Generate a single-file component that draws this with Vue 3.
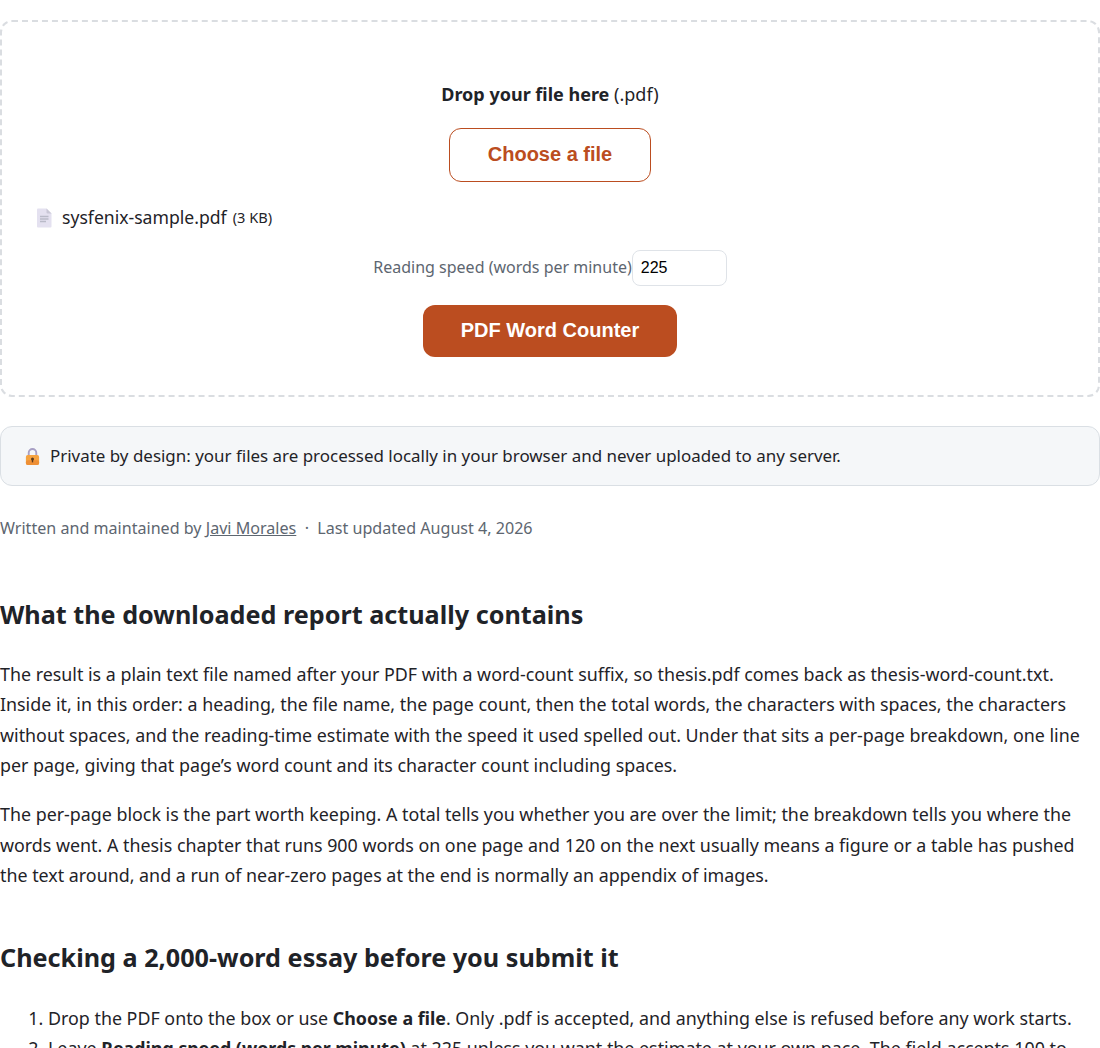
<template>
  <div class="page">
    <div class="dropzone">
      <p class="drop-title"><strong>Drop your file here</strong> (.pdf)</p>
      <button class="choose-btn">Choose a file</button>

      <div class="file-row">
        <svg class="file-icon" viewBox="0 0 16 20" width="16" height="20">
          <path d="M1 1.5Q1 .5 2 .5H10.5L15.5 5.5V18.5Q15.5 19.5 14.5 19.5H2Q1 19.5 1 18.5Z" fill="#e4e1f0" />
          <path d="M10.5 .5L15.5 5.5H11.5Q10.5 5.5 10.5 4.5Z" fill="#c9c7d6" />
          <path d="M4 8.5H12.5M4 11H12.5M4 13.5H10" stroke="#b9bac8" stroke-width="1.4" />
        </svg>
        <span class="file-name">sysfenix-sample.pdf</span>
        <span class="file-size">(3 KB)</span>
      </div>

      <div class="speed-row">
        <label for="speed">Reading speed (words per minute)</label>
        <input id="speed" v-model="speed" type="number" />
      </div>

      <button class="count-btn">PDF Word Counter</button>
    </div>

    <div class="privacy">
      <svg class="lock" viewBox="0 0 18 20" width="17" height="19">
        <path d="M5 9.5V6a4 4 0 0 1 8 0v3.5" fill="none" stroke="#a79fc4" stroke-width="2" />
        <rect x="2" y="8.5" width="14" height="10.5" rx="2" fill="#f5a340" />
        <rect x="2" y="14" width="14" height="5" rx="2" fill="#ee8f35" />
        <circle cx="9" cy="12.6" r="1.6" fill="#5b3a1e" />
        <rect x="8.3" y="13" width="1.4" height="3.2" fill="#5b3a1e" />
      </svg>
      <span>Private by design: your files are processed locally in your browser and never uploaded to any server.</span>
    </div>

    <p class="byline">
      Written and maintained by <a href="#">Javi Morales</a> &nbsp;·&nbsp; Last updated August 4, 2026
    </p>

    <h2 class="first">What the downloaded report actually contains</h2>
    <p>The result is a plain text file named after your PDF with a word-count suffix, so thesis.pdf comes back as thesis-word-count.txt. Inside it, in this order: a heading, the file name, the page count, then the total words, the characters with spaces, the characters without spaces, and the reading-time estimate with the speed it used spelled out. Under that sits a per-page breakdown, one line per page, giving that page’s word count and its character count including spaces.</p>
    <p>The per-page block is the part worth keeping. A total tells you whether you are over the limit; the breakdown tells you where the words went. A thesis chapter that runs 900 words on one page and 120 on the next usually means a figure or a table has pushed the text around, and a run of near-zero pages at the end is normally an appendix of images.</p>

    <h2>Checking a 2,000-word essay before you submit it</h2>
    <ol>
      <li>Drop the PDF onto the box or use <strong>Choose a file</strong>. Only .pdf is accepted, and anything else is refused before any work starts.</li>
      <li>Leave <strong>Reading speed (words per minute)</strong> at 225 unless you want the estimate at your own pace. The field accepts 100 to 1,000.</li>
    </ol>
  </div>
</template>

<script setup>
import { ref } from 'vue';

const speed = ref(225);
</script>

<style scoped>
.page {
  height: 1048px;
  overflow: hidden;
  box-sizing: border-box;
  padding-top: 20px;
  font-family: "Noto Sans", sans-serif;
  font-size: 17.85px;
  line-height: 30.6px;
  color: #1f2328;
}
.dropzone {
  box-sizing: border-box;
  height: 377px;
  border: 2px dashed #dadde1;
  border-radius: 12px;
  padding: 57px 32px 0;
  display: flex;
  flex-direction: column;
  align-items: center;
}
.drop-title { margin: 0; font-size: 18px; }
.choose-btn {
  box-sizing: border-box;
  width: 202px;
  height: 54px;
  margin-top: 18px;
  border: 1px solid #bb4d20;
  border-radius: 12px;
  background: #fff;
  color: #bb4d20;
  font: 700 20px "Liberation Sans", sans-serif;
}
.file-row {
  align-self: flex-start;
  display: flex;
  align-items: center;
  margin-top: 21px;
  height: 30px;
}
.file-icon { margin: 0 10px 0 2px; }
.file-name { font-size: 17.6px; }
.file-size { font-size: 14.6px; margin-left: 6px; }
.speed-row {
  display: flex;
  align-items: center;
  margin-top: 17px;
  color: #5d6670;
  font-size: 16px;
}
.speed-row input {
  box-sizing: border-box;
  width: 95px;
  height: 36px;
  border: 1px solid #dfe3e8;
  border-radius: 8px;
  padding: 1px 8px 0;
  font: 16px "Liberation Sans", sans-serif;
  color: #000;
  -moz-appearance: textfield;
  appearance: textfield;
}
.count-btn {
  width: 254px;
  height: 52px;
  margin-top: 19px;
  padding-bottom: 2px;
  border: none;
  border-radius: 12px;
  background: #bb4d20;
  color: #fff;
  font: 700 20px "Liberation Sans", sans-serif;
}
.privacy {
  box-sizing: border-box;
  height: 60px;
  margin-top: 29px;
  padding: 0 23px;
  display: flex;
  align-items: center;
  gap: 9px;
  background: #f5f7f9;
  border: 1px solid #dadfe4;
  border-radius: 12px;
  font-size: 16.95px;
}
.byline {
  margin: 27px 0 0;
  color: #5d6670;
  font-size: 16.1px;
}
.byline a { color: inherit; }
h2 {
  margin: 49px 0 0;
  font-size: 25.2px;
  line-height: 34px;
  font-weight: 700;
}
h2.first { margin-top: 53px; }
p { margin: 18px 0 0; }
h2 + p { margin-top: 28px; }
ol { margin: 29px 0 0; padding-left: 48px; }
</style>

<style>
body { margin: 0; background: #fff; }
</style>
